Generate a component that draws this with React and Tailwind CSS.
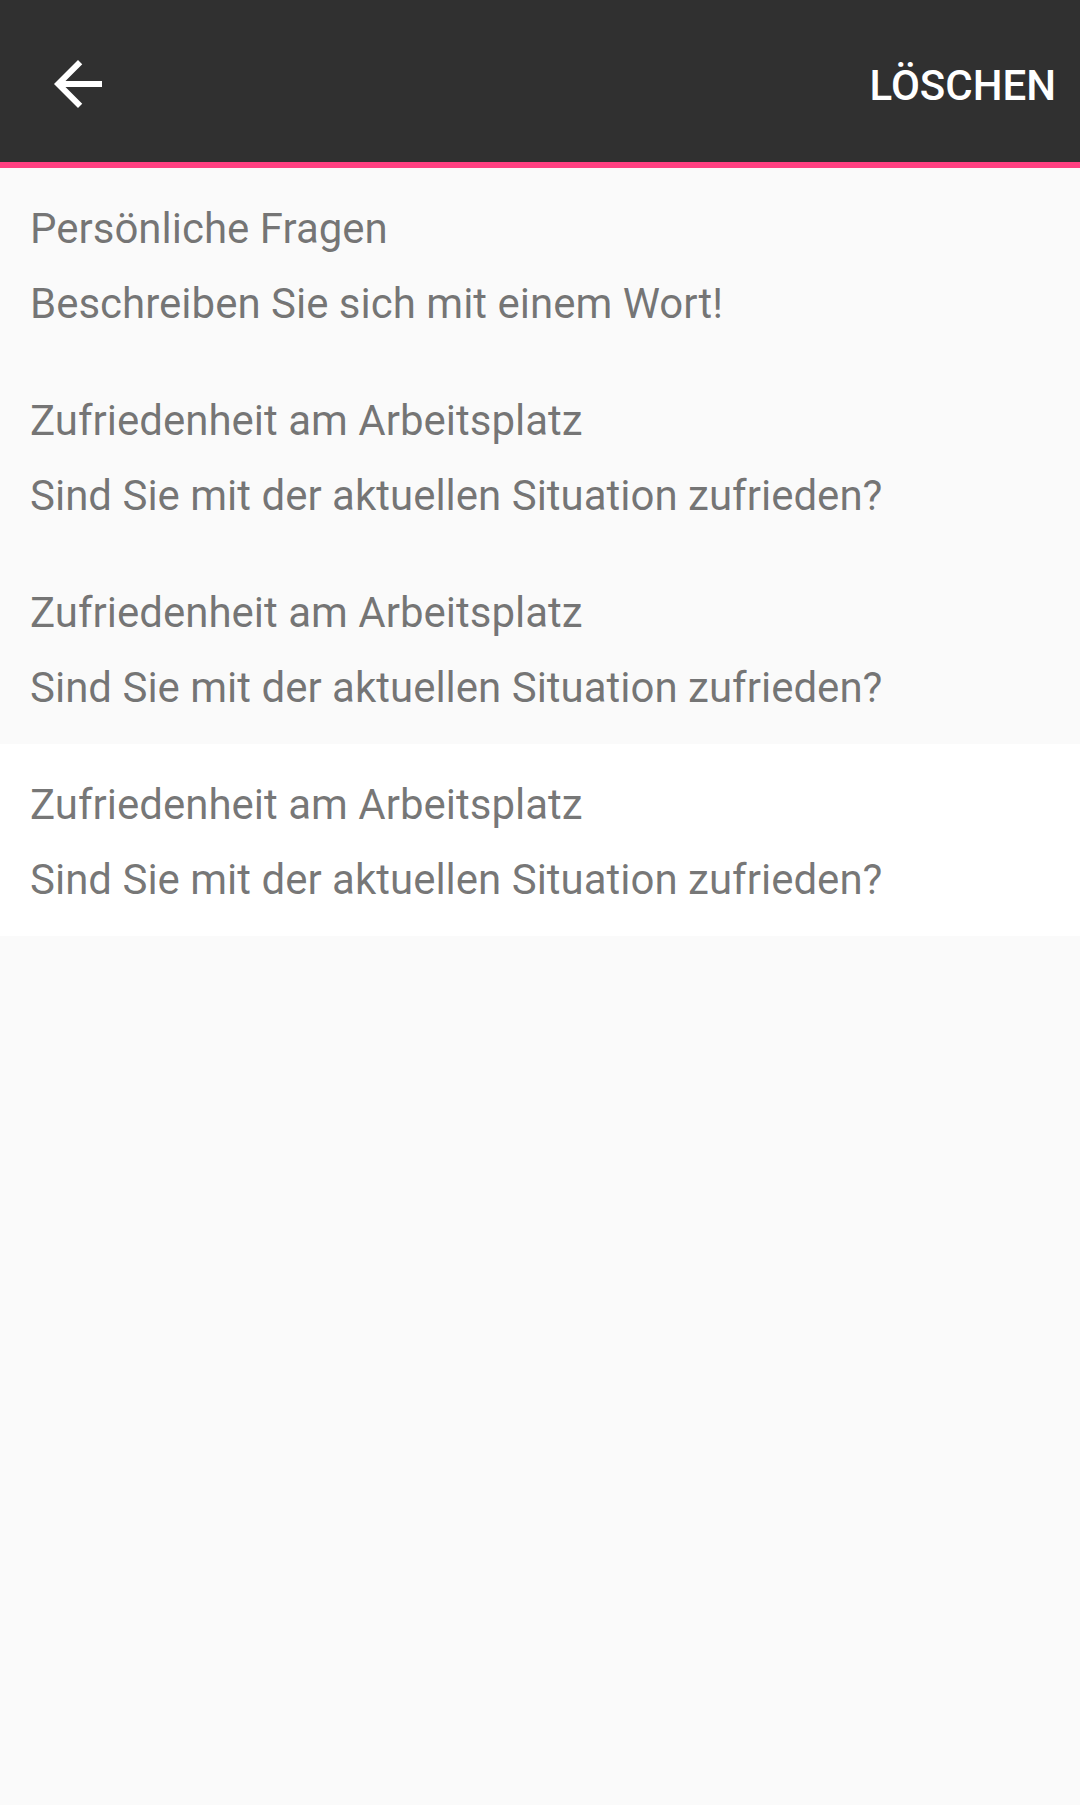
const entries = [
  { id: 1, category: "Persönliche Fragen", question: "Beschreiben Sie sich mit einem Wort!" },
  { id: 2, category: "Zufriedenheit am Arbeitsplatz", question: "Sind Sie mit der aktuellen Situation zufrieden?" },
  { id: 3, category: "Zufriedenheit am Arbeitsplatz", question: "Sind Sie mit der aktuellen Situation zufrieden?" },
  { id: 4, category: "Zufriedenheit am Arbeitsplatz", question: "Sind Sie mit der aktuellen Situation zufrieden?", selected: true },
];

function TopBar() {
  return (
    <header className="flex items-center justify-between border-b-[6px] border-[#ff4081] bg-[#303030] pt-12 pr-6 pb-[42px] pl-[42px] text-white">
      <button type="button" aria-label="Zurück" className="flex size-[72px] items-center justify-center">
        <svg viewBox="0 0 24 24" className="size-[72px]" fill="currentColor" aria-hidden="true">
          <path d="M20 11H7.83l5.59-5.59L12 4l-8 8 8 8 1.41-1.41L7.83 13H20v-2z" />
        </svg>
      </button>
      <button type="button" className="pt-1 text-[42px] leading-[50px] font-medium uppercase">
        Löschen
      </button>
    </header>
  );
}

function Entry({ category, question, selected }) {
  return (
    <li className={`px-[30px] pt-[23px] pb-[19px] ${selected ? "bg-white" : ""}`}>
      <h2 className="leading-[75px]">{category}</h2>
      <p className="leading-[75px]">{question}</p>
    </li>
  );
}

export default function App() {
  return (
    <div className="min-h-screen bg-[#fafafa] font-['Roboto',sans-serif]">
      <TopBar />
      <main>
        <ul className="text-[42px] text-black/54">
          {entries.map((entry) => (
            <Entry key={entry.id} {...entry} />
          ))}
        </ul>
      </main>
    </div>
  );
}
